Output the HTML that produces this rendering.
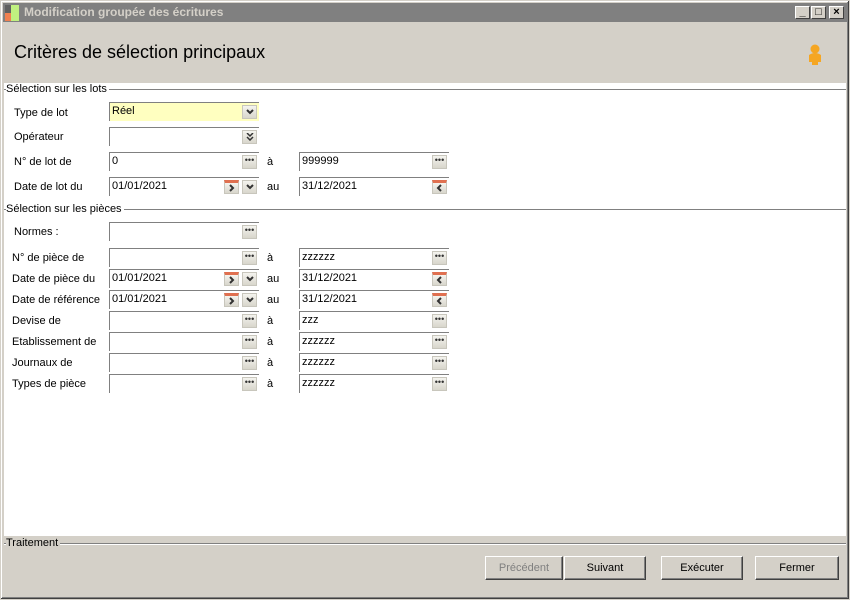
<!DOCTYPE html>
<html><head><meta charset="utf-8"><style>
*{margin:0;padding:0;box-sizing:border-box}
body{width:850px;height:600px;background:#d4d0c8;font-family:"Liberation Sans",sans-serif;font-size:11px;color:#000;position:relative;overflow:hidden}
.a{position:absolute}
.win{left:0;top:0;width:850px;height:600px;border:1px solid #d4d0c8;box-shadow:inset -1px -1px 0 #404040,inset 1px 1px 0 #fff,inset -2px -2px 0 #808080}
.title{left:3px;top:3px;width:844px;height:19px;background:#808080;color:#d4d0c8;font-weight:bold;font-size:12px;line-height:19px;padding-left:21px}
.tb{top:6px;width:15px;height:13px;background:#d4d0c8;border:1px solid;border-color:#fff #404040 #404040 #fff;font-size:11px;line-height:10px;text-align:center;font-weight:bold}
.lbl{line-height:19px;white-space:nowrap}
.in{height:19px;background:#fff;border-top:1px solid #808080;border-left:1px solid #808080;line-height:16px;padding-left:2px;width:150px}
.bt{top:2px;width:15px;height:14px;background:linear-gradient(#f4f3ee,#d8d6cc);border:1px solid #c8c6bc;font-size:9px;line-height:9px;text-align:center;color:#333}
.bt svg,.cal svg{position:absolute;left:3px;top:3px}
.cal{top:2px;width:15px;height:14px;background:linear-gradient(#f4f3ee,#d8d6cc);border:1px solid #c8c6bc;border-top:3px solid #e07050}
.sep{height:2px;border-top:1px solid #808080;border-bottom:1px solid #fff}
.btn{top:556px;height:24px;border:1px solid;border-color:#fff #404040 #404040 #fff;box-shadow:inset -1px -1px 0 #808080;text-align:center;line-height:22px;background:#d4d0c8}
</style></head><body>
<div class="a win"></div>
<div class="a title">Modification groupée des écritures</div>
<div class="a" style="left:5px;top:5px;width:6px;height:8px;background:#606060"></div>
<div class="a" style="left:5px;top:13px;width:6px;height:8px;background:#f08050"></div>
<div class="a" style="left:11px;top:5px;width:8px;height:16px;background:#c0f080"></div>
<div class="a tb" style="left:795px">_</div>
<div class="a tb" style="left:811px">□</div>
<div class="a tb" style="left:829px">×</div>
<div class="a" style="left:14px;top:42px;font-size:18px">Critères de sélection principaux</div>
<svg class="a" style="left:806px;top:42px" width="18" height="24"><circle cx="9" cy="7" r="4.5" fill="#f5a623"/><path d="M3 13 Q9 9 15 13 L15 20 L12 20 L12 23 L6 23 L6 20 L3 20Z" fill="#f5a623"/></svg>
<div class="a" style="left:4px;top:83px;width:842px;height:453px;background:#fff"></div>
<div class="a sep" style="left:4px;top:89px;width:842px"></div>
<div class="a" style="left:6px;top:83px;background:#fff;padding-right:2px;line-height:13px">Sélection sur les lots</div>
<div class="a sep" style="left:4px;top:209px;width:842px"></div>
<div class="a" style="left:6px;top:203px;background:#fff;padding-right:2px;line-height:13px">Sélection sur les pièces</div>

<div class="a lbl" style="left:14px;top:104px">Type de lot</div>
<div class="a in" style="left:109px;top:102px;background:#ffffc0">Réel<div class="a bt" style="left:132px"><svg width="8" height="6"><path d="M1 1L4 4L7 1" stroke="#333" stroke-width="2" fill="none"/></svg></div></div>
<div class="a lbl" style="left:14px;top:128px">Opérateur</div>
<div class="a in" style="left:109px;top:127px"><div class="a bt" style="left:132px"><svg width="8" height="8" style="top:2px"><path d="M1 0L4 3L7 0M1 4L4 7L7 4" stroke="#333" stroke-width="1.5" fill="none"/></svg></div></div>
<div class="a lbl" style="left:14px;top:153px">N° de lot de</div>
<div class="a in" style="left:109px;top:152px">0<div class="a bt" style="left:132px">•••</div></div>
<div class="a lbl" style="left:267px;top:153px">à</div>
<div class="a in" style="left:299px;top:152px">999999<div class="a bt" style="left:132px">•••</div></div>
<div class="a lbl" style="left:14px;top:178px">Date de lot du</div>
<div class="a in" style="left:109px;top:177px">01/01/2021<div class="a cal" style="left:114px"><svg width="8" height="8" style="top:1px"><path d="M2 1L5 4L2 7" stroke="#333" stroke-width="2" fill="none"/></svg></div><div class="a bt" style="left:132px"><svg width="8" height="6"><path d="M1 1L4 4L7 1" stroke="#333" stroke-width="2" fill="none"/></svg></div></div>
<div class="a lbl" style="left:267px;top:178px">au</div>
<div class="a in" style="left:299px;top:177px">31/12/2021<div class="a cal" style="left:132px"><svg width="8" height="8" style="top:1px"><path d="M5 1L2 4L5 7" stroke="#333" stroke-width="2" fill="none"/></svg></div></div>

<div class="a lbl" style="left:14px;top:223px">Normes :</div>
<div class="a in" style="left:109px;top:222px"><div class="a bt" style="left:132px">•••</div></div>

<div class="a lbl" style="left:12px;top:249px">N° de pièce de</div>
<div class="a in" style="left:109px;top:248px"><div class="a bt" style="left:132px">•••</div></div>
<div class="a lbl" style="left:267px;top:249px">à</div>
<div class="a in" style="left:299px;top:248px">zzzzzz<div class="a bt" style="left:132px">•••</div></div>

<div class="a lbl" style="left:12px;top:270px">Date de pièce du</div>
<div class="a in" style="left:109px;top:269px">01/01/2021<div class="a cal" style="left:114px"><svg width="8" height="8" style="top:1px"><path d="M2 1L5 4L2 7" stroke="#333" stroke-width="2" fill="none"/></svg></div><div class="a bt" style="left:132px"><svg width="8" height="6"><path d="M1 1L4 4L7 1" stroke="#333" stroke-width="2" fill="none"/></svg></div></div>
<div class="a lbl" style="left:267px;top:270px">au</div>
<div class="a in" style="left:299px;top:269px">31/12/2021<div class="a cal" style="left:132px"><svg width="8" height="8" style="top:1px"><path d="M5 1L2 4L5 7" stroke="#333" stroke-width="2" fill="none"/></svg></div></div>

<div class="a lbl" style="left:12px;top:291px">Date de référence</div>
<div class="a in" style="left:109px;top:290px">01/01/2021<div class="a cal" style="left:114px"><svg width="8" height="8" style="top:1px"><path d="M2 1L5 4L2 7" stroke="#333" stroke-width="2" fill="none"/></svg></div><div class="a bt" style="left:132px"><svg width="8" height="6"><path d="M1 1L4 4L7 1" stroke="#333" stroke-width="2" fill="none"/></svg></div></div>
<div class="a lbl" style="left:267px;top:291px">au</div>
<div class="a in" style="left:299px;top:290px">31/12/2021<div class="a cal" style="left:132px"><svg width="8" height="8" style="top:1px"><path d="M5 1L2 4L5 7" stroke="#333" stroke-width="2" fill="none"/></svg></div></div>

<div class="a lbl" style="left:12px;top:312px">Devise de</div>
<div class="a in" style="left:109px;top:311px"><div class="a bt" style="left:132px">•••</div></div>
<div class="a lbl" style="left:267px;top:312px">à</div>
<div class="a in" style="left:299px;top:311px">zzz<div class="a bt" style="left:132px">•••</div></div>

<div class="a lbl" style="left:12px;top:333px">Etablissement de</div>
<div class="a in" style="left:109px;top:332px"><div class="a bt" style="left:132px">•••</div></div>
<div class="a lbl" style="left:267px;top:333px">à</div>
<div class="a in" style="left:299px;top:332px">zzzzzz<div class="a bt" style="left:132px">•••</div></div>

<div class="a lbl" style="left:12px;top:354px">Journaux de</div>
<div class="a in" style="left:109px;top:353px"><div class="a bt" style="left:132px">•••</div></div>
<div class="a lbl" style="left:267px;top:354px">à</div>
<div class="a in" style="left:299px;top:353px">zzzzzz<div class="a bt" style="left:132px">•••</div></div>

<div class="a lbl" style="left:12px;top:375px">Types de pièce</div>
<div class="a in" style="left:109px;top:374px"><div class="a bt" style="left:132px">•••</div></div>
<div class="a lbl" style="left:267px;top:375px">à</div>
<div class="a in" style="left:299px;top:374px">zzzzzz<div class="a bt" style="left:132px">•••</div></div>

<div class="a sep" style="left:4px;top:543px;width:842px"></div>
<div class="a" style="left:6px;top:537px;background:#d4d0c8;padding-right:2px;line-height:13px">Traitement</div>
<div class="a btn" style="left:485px;width:78px;color:#808080">Précédent</div>
<div class="a btn" style="left:564px;width:82px">Suivant</div>
<div class="a btn" style="left:661px;width:82px">Exécuter</div>
<div class="a btn" style="left:755px;width:84px">Fermer</div>
</body></html>
